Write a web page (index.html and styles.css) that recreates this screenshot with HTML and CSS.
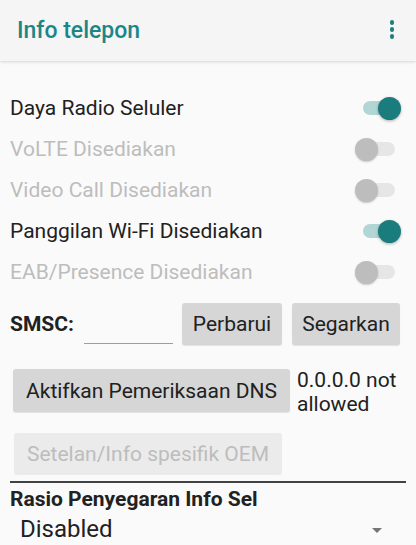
FILE: index.html
```html
<!DOCTYPE html>
<html lang="id">
<head>
  <meta charset="UTF-8" />
  <meta name="viewport" content="width=device-width, initial-scale=1" />
  <title>Info telepon</title>
  <link rel="stylesheet" href="styles.css">
</head>
<body>
  <header class="toolbar">
    <div class="title">Info telepon</div>
    <div class="menu"><span></span><span></span><span></span></div>
  </header>
  <main class="content">
    <div class="switch-row">
      <span class="label">Daya Radio Seluler</span>
      <span class="switch on"></span>
    </div>
    <div class="switch-row disabled">
      <span class="label">VoLTE Disediakan</span>
      <span class="switch"></span>
    </div>
    <div class="switch-row disabled">
      <span class="label">Video Call Disediakan</span>
      <span class="switch"></span>
    </div>
    <div class="switch-row">
      <span class="label">Panggilan Wi-Fi Disediakan</span>
      <span class="switch on"></span>
    </div>
    <div class="switch-row disabled">
      <span class="label">EAB/Presence Disediakan</span>
      <span class="switch"></span>
    </div>

    <div class="smsc-row">
      <span class="smsc-label">SMSC:</span>
      <span class="smsc-input"></span>
      <button class="btn btn-update">Perbarui</button>
      <button class="btn btn-refresh">Segarkan</button>
    </div>

    <div class="dns-row">
      <button class="btn btn-dns">Aktifkan Pemeriksaan DNS</button>
      <span class="dns-status">0.0.0.0 not allowed</span>
    </div>

    <button class="btn btn-oem" disabled>Setelan/Info spesifik OEM</button>

    <hr class="divider" />

    <div class="section-title">Rasio Penyegaran Info Sel</div>
    <div class="spinner">
      <span>Disabled</span>
      <span class="arrow"></span>
    </div>
  </main>
</body>
</html>
```

FILE: styles.css
```css
body {
  margin: 0;
  font-family: Roboto, "Noto Sans", sans-serif;
  background: #fafafa;
  color: #212121;
  overflow: hidden;
}
.toolbar {
  height: 61px;
  background: #f5f5f5;
  display: flex;
  align-items: center;
  justify-content: space-between;
  padding: 0 22px 0 17px;
  box-shadow: 0 1px 3px rgba(0,0,0,0.15);
  position: relative;
}
.title {
  font-size: 23px;
  font-weight: 500;
  color: #1c8686;
  margin-top: -1px;
}
.menu {
  display: flex;
  flex-direction: column;
  gap: 2.5px;
  margin-top: -2px;
}
.menu span {
  width: 4.5px;
  height: 4.5px;
  border-radius: 50%;
  background: #1c8080;
}
.content {
  padding: 26px 10px 0 10px;
}
.switch-row {
  height: 41px;
  display: flex;
  align-items: center;
  justify-content: space-between;
  font-size: 21px;
}
.switch-row.disabled {
  color: #bdbdbd;
}
.switch {
  width: 32px;
  height: 14px;
  border-radius: 7px;
  background: #e6e6e6;
  position: relative;
  margin-right: 11px;
}
.switch::after {
  content: "";
  position: absolute;
  top: -4px;
  left: -8px;
  width: 23px;
  height: 23px;
  border-radius: 50%;
  background: #bdbdbd;
  box-shadow: 0 1px 2px rgba(0,0,0,0.2);
}
.switch.on {
  background: #b2d6d6;
}
.switch.on::after {
  left: 15px;
  background: #1a7c7c;
  box-shadow: 0 1px 3px rgba(0,0,0,0.3);
}
.smsc-row {
  display: flex;
  align-items: center;
  margin-top: 11px;
}
.smsc-label {
  font-size: 21px;
  font-weight: bold;
  width: 74px;
}
.smsc-input {
  width: 89px;
  height: 1px;
  background: #9e9e9e;
  margin-top: 39px;
  margin-right: 9px;
}
.btn {
  font-family: Roboto, "Noto Sans", sans-serif;
  font-size: 21px;
  color: #212121;
  background: #d6d6d6;
  border: none;
  border-radius: 3px;
  height: 42px;
  padding: 0 6px;
  box-shadow: 0 1px 1px rgba(0,0,0,0.1);
}
.btn-update {
  width: 100px;
  margin-right: 10px;
}
.btn-refresh {
  width: 108px;
}
.dns-row {
  display: flex;
  align-items: flex-start;
  margin-top: 24px;
  padding-left: 3px;
}
.btn-dns {
  width: 277px;
  height: 43px;
  flex-shrink: 0;
}
.dns-status {
  font-size: 21px;
  line-height: 24px;
  width: 112px;
  margin-left: 7px;
  margin-top: -1px;
}
.btn-oem {
  display: block;
  margin: 17px 0 0 4px;
  width: 268px;
  background: #ebebeb;
  color: #bdbdbd;
  box-shadow: none;
}
.divider {
  border: none;
  border-top: 2px solid #424242;
  margin: 6px 0 0 0;
}
.section-title {
  font-size: 21px;
  font-weight: bold;
  margin-top: 3px;
  line-height: 26px;
}
.spinner {
  display: flex;
  align-items: center;
  justify-content: space-between;
  font-size: 24px;
  padding: 0 24px 0 10px;
  height: 34px;
}
.arrow {
  width: 0;
  height: 0;
  border-left: 5px solid transparent;
  border-right: 5px solid transparent;
  border-top: 5px solid #757575;
  margin-top: 2px;
}
```
